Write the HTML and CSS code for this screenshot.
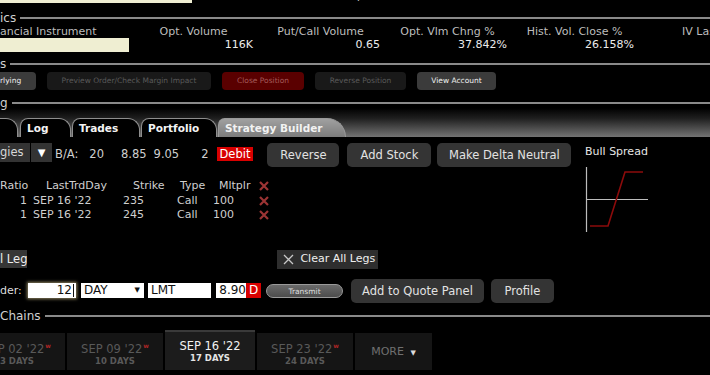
FILE: index.html
```html
<!DOCTYPE html>
<html>
<head>
    <meta http-equiv="Content-Type" content="text/html; charset=utf-8">
    <title>Strategy Builder</title>
    <link rel="stylesheet" href="styles.css">
</head>
<body>
    <div class="topstrip">
        <div class="cream-bar"></div>
        <span class="cut cut-a">1,000</span>
        <span class="cut cut-b">202.23</span>
    </div>

    <div class="sect sect-stats"><span>ics</span><div class="rule"></div></div>
    <div class="stats">
        <div class="lbl first">ancial Instrument</div>
        <div class="lbl">Opt. Volume</div>
        <div class="lbl">Put/Call Volume</div>
        <div class="lbl">Opt. Vlm Chng %</div>
        <div class="lbl">Hist. Vol. Close %</div>
        <div class="lbl last">IV Last %</div>
        <div class="val"><div class="cream-box"></div></div>
        <div class="val">116K</div>
        <div class="val">0.65</div>
        <div class="val">37.842%</div>
        <div class="val">26.158%</div>
        <div class="val"></div>
    </div>

    <div class="sect sect-actions"><span>s</span><div class="rule"></div></div>
    <div class="actions">
        <div class="act on first">rlying</div>
        <div class="act off w-preview">Preview Order/Check Margin Impact</div>
        <div class="act red">Close Position</div>
        <div class="act off w-reverse">Reverse Position</div>
        <div class="act on w-view">View Account</div>
    </div>

    <div class="sect sect-trading"><span>g</span><div class="rule"></div></div>
    <div class="tabstrip">
        <div class="tab stub"></div>
        <div class="tab">Log</div>
        <div class="tab">Trades</div>
        <div class="tab">Portfolio</div>
        <div class="tab active">Strategy Builder</div>
    </div>

    <div class="builder">
        <div class="builder-left">
            <div class="ba-row">
                <div class="pick">gies</div>
                <div class="pick-arrow">&#9660;</div>
                <span class="ba-lbl">B/A:</span>
                <span class="ba-size">20</span>
                <span class="ba-bid">8.85</span>
                <span class="ba-ask">9.05</span>
                <span class="ba-qty">2</span>
                <span class="debit">Debit</span>
                <div class="btn w-rev">Reverse</div>
                <div class="btn w-stock">Add Stock</div>
                <div class="btn w-delta">Make Delta Neutral</div>
            </div>

            <div class="legs">
                <div class="leg head">
                    <span class="c-ratio">Ratio</span>
                    <span class="c-day">LastTrdDay</span>
                    <span class="c-strike">Strike</span>
                    <span class="c-type">Type</span>
                    <span class="c-mult">Mltplr</span>
                    <span class="c-x"><svg width="10" height="10" viewBox="0 0 10 10"><path d="M1 1L9 9M9 1L1 9" stroke="#9c3434" stroke-width="2.2"/></svg></span>
                </div>
                <div class="leg">
                    <span class="c-ratio">1</span>
                    <span class="c-day">SEP 16 '22</span>
                    <span class="c-strike">235</span>
                    <span class="c-type">Call</span>
                    <span class="c-mult">100</span>
                    <span class="c-x"><svg width="10" height="10" viewBox="0 0 10 10"><path d="M1 1L9 9M9 1L1 9" stroke="#9c3434" stroke-width="2.2"/></svg></span>
                </div>
                <div class="leg">
                    <span class="c-ratio">1</span>
                    <span class="c-day">SEP 16 '22</span>
                    <span class="c-strike">245</span>
                    <span class="c-type">Call</span>
                    <span class="c-mult">100</span>
                    <span class="c-x"><svg width="10" height="10" viewBox="0 0 10 10"><path d="M1 1L9 9M9 1L1 9" stroke="#9c3434" stroke-width="2.2"/></svg></span>
                </div>
            </div>

            <div class="leg-btns">
                <div class="flat">l Leg</div>
                <div class="flat clear">
                    <svg width="11" height="11" viewBox="0 0 11 11"><path d="M1 1L10 10M10 1L1 10" stroke="#c8c8c8" stroke-width="1.3"/></svg>
                    Clear All Legs
                </div>
            </div>

            <div class="order-row">
                <span class="order-lbl">der:</span>
                <div class="field qty">12<span class="caret"></span></div>
                <div class="field tif">DAY<span class="dd">&#9660;</span></div>
                <div class="field otype">LMT</div>
                <div class="field price">8.90</div>
                <div class="dflag">D</div>
                <div class="transmit">Transmit</div>
                <div class="btn w-quote">Add to Quote Panel</div>
                <div class="btn w-profile">Profile</div>
            </div>
        </div>

        <div class="builder-right">
            <div class="spread-name">Bull Spread</div>
            <svg class="payoff" width="66" height="66" viewBox="0 0 66 66">
                <path d="M1.5 0V65" stroke="#bdbdbd" stroke-width="1.2"/>
                <path d="M1.5 32.5H63" stroke="#bdbdbd" stroke-width="1.2"/>
                <path d="M5 59H23L40 5H58" fill="none" stroke="#8c0b0b" stroke-width="1.6"/>
            </svg>
        </div>
    </div>

    <div class="sect sect-chains"><span>Chains</span><div class="rule"></div></div>
    <div class="expiries">
        <div class="exp first"><div class="exp-date">SEP 02 '22<sup>w</sup></div><div class="exp-days">3 DAYS</div></div>
        <div class="exp"><div class="exp-date">SEP 09 '22<sup>w</sup></div><div class="exp-days">10 DAYS</div></div>
        <div class="exp current"><div class="exp-date">SEP 16 '22</div><div class="exp-days">17 DAYS</div></div>
        <div class="exp"><div class="exp-date">SEP 23 '22<sup>w</sup></div><div class="exp-days">24 DAYS</div></div>
        <div class="exp more">MORE <span class="more-arrow">&#9660;</span></div>
    </div>
</body>
</html>
```

FILE: styles.css
```css
body {
    font-family: "DejaVu Sans", Verdana, sans-serif;
    font-size: 11px;
    background-color: #000;
    color: #c8c8c8;
    margin: 0;
    padding: 0;
    width: 710px;
    height: 375px;
    overflow: hidden;
}

/* scrolled-off row at the very top */
.topstrip {
    height: 4px;
    overflow: hidden;
    display: flex;
    align-items: flex-end;
}
.cream-bar {
    width: 192px;
    height: 3px;
    align-self: flex-start;
    background-color: #efeed2;
}
.cut {
    line-height: 12px;
    margin-top: -9px;
    align-self: flex-start;
    color: #e0e0e0;
}
.cut-a {
    margin-left: 158px;
}
.cut-b {
    margin-left: 160px;
}

/* section headers with a rule */
.sect {
    display: flex;
    align-items: center;
    height: 14px;
    font-size: 12px;
    color: #d0d0d0;
}
.rule {
    flex: 1;
    height: 2px;
    margin-left: 4px;
    background-color: #8a8a8a;
}
.sect-stats {
    margin-top: 7px;
}
.sect-actions {
    margin-top: 5px;
}
.sect-trading {
    margin-top: 8px;
    height: 10px;
}
.sect-chains {
    margin-top: 6px;
}

/* statistics grid */
.stats {
    display: grid;
    grid-template-columns: 127px 127px 127px 127px 127px 1fr;
    grid-template-rows: 13px 14px;
    color: #bdbdbd;
    font-size: 11px;
}
.lbl {
    text-align: center;
    padding-left: 6px;
    white-space: nowrap;
    line-height: 13px;
}
.lbl.first {
    text-align: left;
    padding-left: 0;
}
.lbl.last {
    text-align: left;
    padding-left: 47px;
}
.val {
    text-align: right;
    padding-right: 1px;
    color: #ececec;
    line-height: 14px;
}
.cream-box {
    width: 129px;
    height: 14px;
    background-color: #efeed2;
}

/* action buttons */
.actions {
    display: flex;
    gap: 11px;
    margin-top: 1px;
    height: 18px;
}
.act {
    height: 18px;
    line-height: 18px;
    border-radius: 4px;
    font-size: 7.5px;
    text-align: center;
    white-space: nowrap;
}
.act.first {
    width: 36px;
    text-align: left;
    border-radius: 0 4px 4px 0;
}
.act.on {
    background-color: #3b3b3b;
    color: #f0f0f0;
}
.act.off {
    background-color: #191919;
    color: #5a5a5a;
}
.act.red {
    width: 82px;
    background-color: #5a0000;
    color: #a45a5a;
}
.w-preview {
    width: 164px;
}
.w-reverse {
    width: 91px;
}
.w-view {
    width: 79px;
}

/* tab strip */
.tabstrip {
    height: 29px;
    display: flex;
    align-items: flex-end;
    background: linear-gradient(#000 0%, #1e1e1e 35%, #747474 100%);
}
.tab {
    height: 18px;
    line-height: 19px;
    padding: 0 20px 0 6px;
    margin-right: 1px;
    background-color: #000;
    border: 1px solid #8e8e8e;
    border-bottom: none;
    border-radius: 8px 12px 0 0;
    color: #f4f4f4;
    font-weight: bold;
    font-size: 10.5px;
    white-space: nowrap;
}
.tab.stub {
    width: 17px;
    padding: 0;
    border-left: none;
    border-radius: 0 12px 0 0;
    margin-right: 2px;
}
.tab:nth-child(2) {
    width: 23px;
}
.tab:nth-child(3) {
    width: 40px;
}
.tab:nth-child(4) {
    width: 48px;
}
.tab.active {
    width: 100px;
    background: linear-gradient(#a0a0a0, #7c7c7c);
    border-color: #9a9a9a;
    color: #f2f2f2;
    border-radius: 7px 20px 0 0;
}

/* strategy builder body */
.builder {
    display: flex;
}
.builder-left {
    width: 585px;
}
.builder-right {
    padding-top: 8px;
}
.ba-row {
    display: flex;
    align-items: center;
    height: 24px;
    margin-top: 6px;
    color: #cfcfcf;
    font-size: 11.5px;
}
.pick {
    width: 30px;
    height: 19px;
    line-height: 19px;
    margin-top: -5px;
    background-color: #333;
    color: #d8d8d8;
}
.pick-arrow {
    width: 21px;
    height: 19px;
    line-height: 19px;
    margin-top: -5px;
    margin-left: 1px;
    text-align: center;
    background-color: #333;
    color: #fff;
    font-size: 10px;
}
.ba-lbl {
    margin-left: 3px;
    margin-top: -3px;
}
.ba-size {
    margin-left: 11px;
    margin-top: -3px;
}
.ba-bid {
    margin-left: 17px;
    margin-top: -3px;
}
.ba-ask {
    margin-left: 7px;
    margin-top: -3px;
}
.ba-qty {
    margin-left: 22px;
    margin-top: -3px;
}
.debit {
    margin-left: 8px;
    margin-top: -2px;
    padding: 0 3px;
    height: 14px;
    line-height: 14px;
    background-color: #d80000;
    color: #fff;
}
.btn {
    height: 24px;
    line-height: 24px;
    text-align: center;
    background-color: #343434;
    border-radius: 5px;
    color: #e2e2e2;
    font-size: 11.5px;
    white-space: nowrap;
}
.w-rev {
    width: 72px;
    margin-left: 14px;
}
.w-stock {
    width: 84px;
    margin-left: 8px;
}
.w-delta {
    width: 134px;
    margin-left: 6px;
}

.legs {
    margin-top: 12px;
    color: #cfcfcf;
}
.leg {
    display: grid;
    grid-template-columns: 30px 82px 60px 40px 43px 20px;
    height: 14.5px;
    line-height: 14.5px;
    white-space: nowrap;
}
.c-ratio {
    text-align: right;
    padding-right: 3px;
}
.c-day {
    padding-left: 3px;
}
.c-strike {
    padding-left: 11px;
}
.c-type {
    padding-left: 5px;
}
.c-mult {
    padding-left: 1px;
}
.c-x {
    display: flex;
    align-items: center;
    padding-left: 4px;
}
.head .c-ratio {
    padding-right: 2px;
}
.head .c-day {
    padding-left: 16px;
}
.head .c-strike {
    padding-left: 21px;
}
.head .c-type {
    padding-left: 8px;
}
.head .c-mult {
    padding-left: 7px;
}

.leg-btns {
    display: flex;
    align-items: center;
    margin-top: 27px;
    height: 19px;
}
.flat {
    height: 18px;
    line-height: 18px;
    background-color: #363636;
    color: #eee;
    font-size: 11.5px;
    white-space: nowrap;
}
.flat.clear {
    display: flex;
    align-items: center;
    gap: 6px;
    height: 19px;
    margin-left: 250px;
    padding: 0 3px 0 6px;
    background-color: #2e2e2e;
    font-size: 11px;
}

.order-row {
    display: flex;
    align-items: center;
    margin-top: 10px;
    height: 24px;
}
.order-lbl {
    width: 28px;
    color: #ddd;
}
.field {
    height: 15px;
    line-height: 15px;
    background-color: #fff;
    color: #111;
    font-size: 12px;
    box-sizing: border-box;
    white-space: nowrap;
}
.qty {
    width: 48px;
    text-align: right;
    padding-right: 2px;
    box-shadow: 0 0 3px 1px #8f8460;
}
.caret {
    display: inline-block;
    width: 1px;
    height: 13px;
    margin-left: 1px;
    vertical-align: top;
    margin-top: 1px;
    background-color: #111;
}
.tif {
    width: 63px;
    margin-left: 5px;
    padding-left: 3px;
    display: flex;
    justify-content: space-between;
}
.dd {
    font-size: 7px;
    padding-right: 4px;
}
.otype {
    width: 63px;
    margin-left: 4px;
    padding-left: 3px;
}
.price {
    width: 30px;
    margin-left: 5px;
    text-align: right;
}
.dflag {
    width: 15px;
    height: 15px;
    line-height: 15px;
    text-align: center;
    background-color: #d80000;
    color: #fff;
    font-size: 12px;
}
.transmit {
    width: 77px;
    height: 14px;
    line-height: 14px;
    margin-left: 5px;
    border: 1px solid #9a9a9a;
    border-radius: 8px;
    box-sizing: border-box;
    background: linear-gradient(#6a6a6a, #4c4c4c);
    color: #ddd;
    font-size: 7.5px;
    text-align: center;
}
.w-quote {
    width: 133px;
    margin-left: 8px;
}
.w-profile {
    width: 63px;
    margin-left: 7px;
}

.spread-name {
    color: #e6e6e6;
    font-size: 11px;
    line-height: 14px;
}
.payoff {
    display: block;
    margin-top: 8px;
}

/* expiry tabs */
.expiries {
    display: flex;
    align-items: flex-end;
    gap: 2px;
    height: 40px;
    margin-top: 7px;
}
.exp {
    width: 96px;
    height: 37px;
    background-color: #151515;
    text-align: center;
    color: #595959;
    flex-shrink: 0;
}
.exp.first {
    margin-left: -31px;
}
.exp-date {
    margin-top: 6px;
    font-size: 11.5px;
    line-height: 14px;
    white-space: nowrap;
}
.exp-date sup {
    font-size: 6px;
    color: #b02626;
    font-weight: bold;
    vertical-align: 5px;
    margin-left: 1px;
}
.exp-days {
    font-size: 8.5px;
    font-weight: bold;
    line-height: 11px;
}
.exp.current {
    width: 90px;
    height: 40px;
    box-sizing: border-box;
    border-top: 2px solid #3a3a3a;
    background-color: #1c1c1c;
    color: #f2f2f2;
}
.exp.current .exp-date {
    margin-top: 7px;
}
.exp.current .exp-days {
    color: #e4e4e4;
}
.exp.more {
    width: 77px;
    line-height: 37px;
    color: #707070;
    font-size: 11px;
}
.more-arrow {
    color: #dcdcdc;
    font-size: 7px;
    margin-left: 3px;
}
```
